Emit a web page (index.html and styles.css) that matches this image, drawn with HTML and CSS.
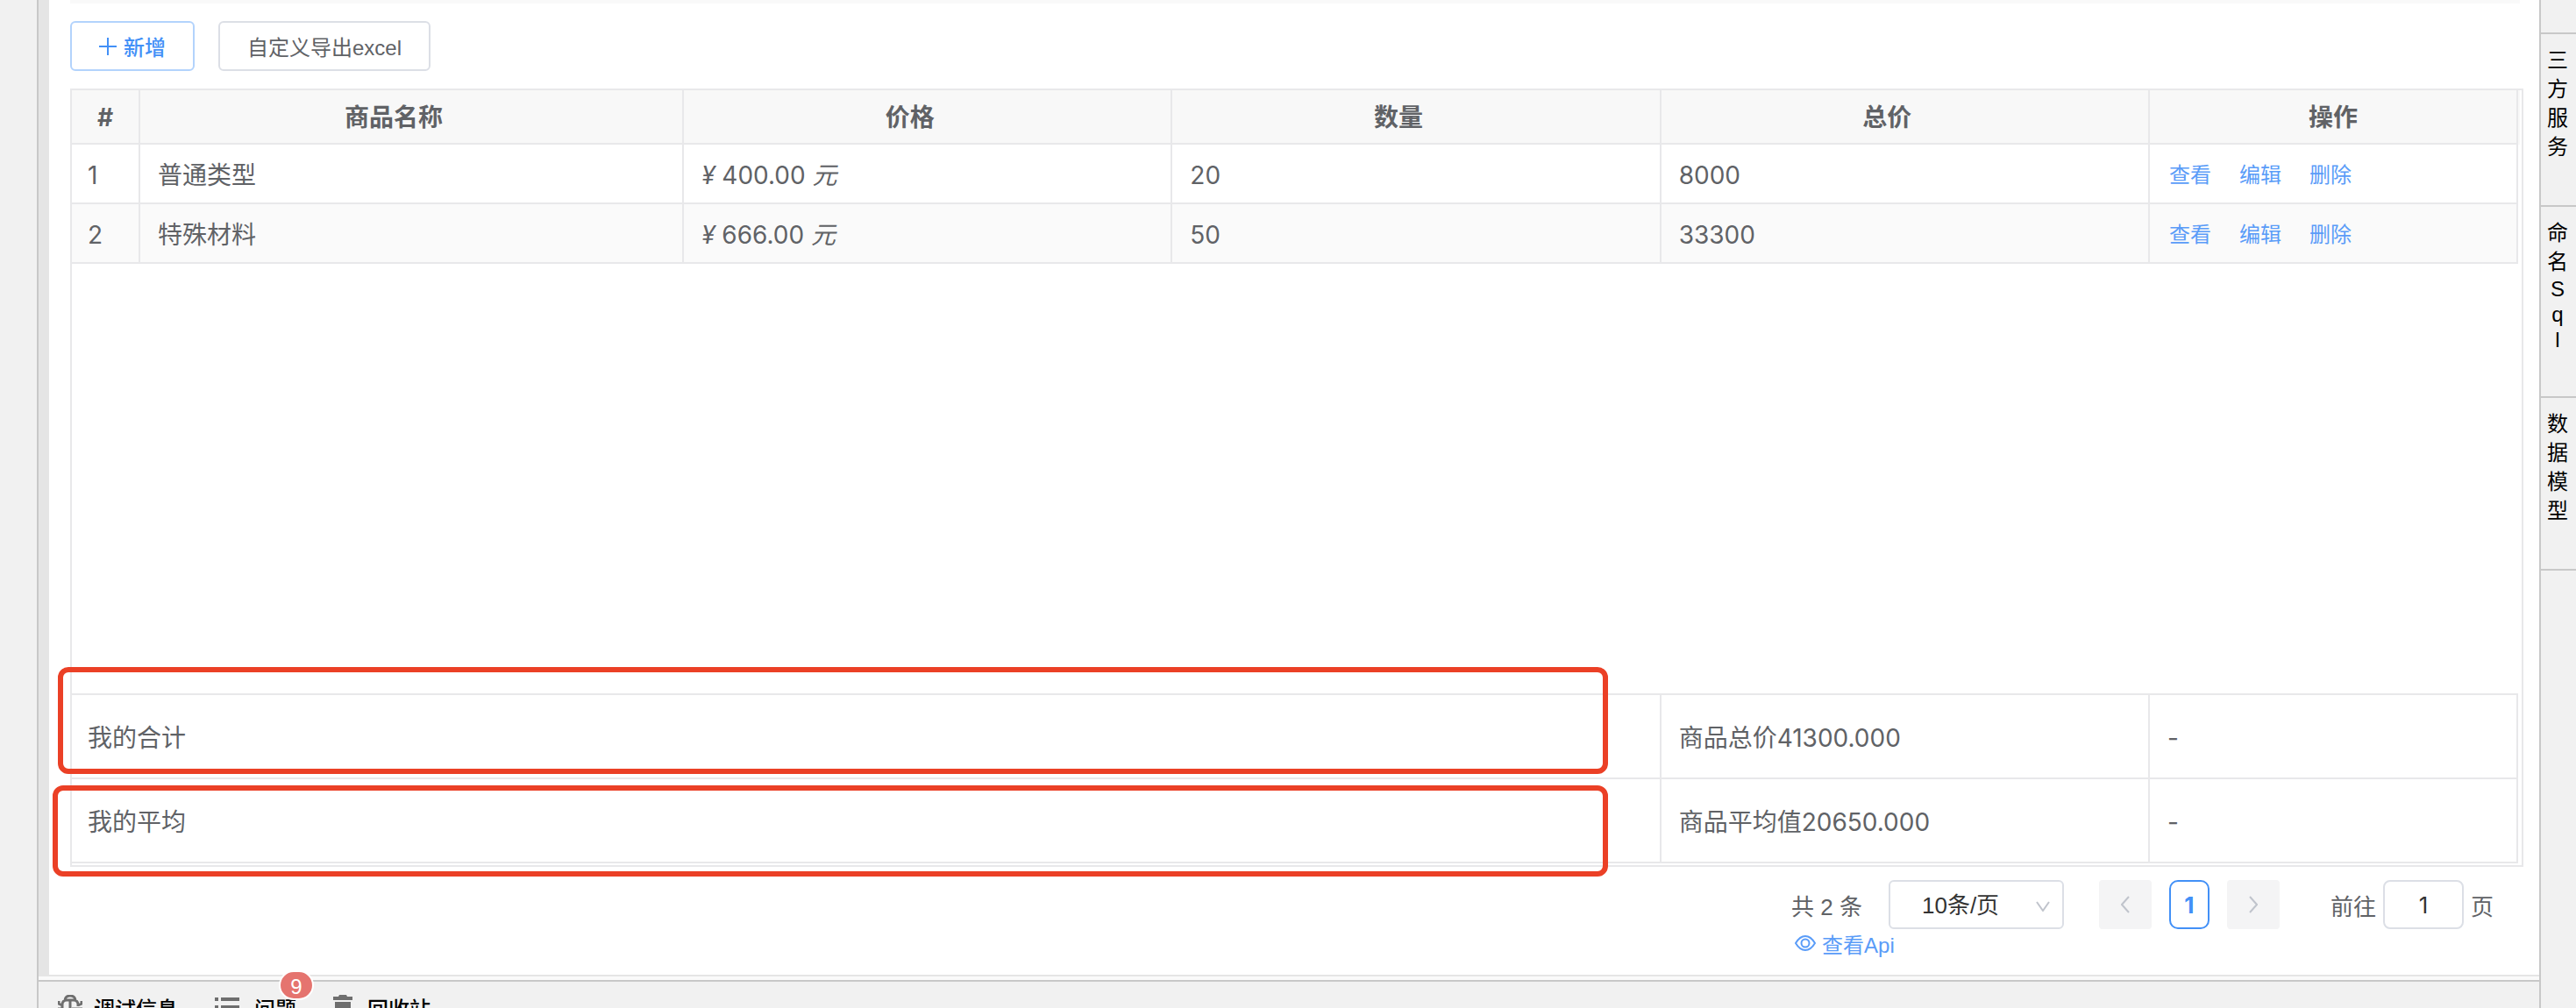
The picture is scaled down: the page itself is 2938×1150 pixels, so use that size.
FILE: index.html
```html
<!DOCTYPE html>
<html lang="zh-CN">
<head>
<meta charset="UTF-8" />
<meta name="viewport" content="width=device-width, initial-scale=1.0"/>
<title>商品列表</title>

<link rel="stylesheet" href="styles.css">
</head>

<body>

<div class="layout">
  <aside class="left-bar"></aside>

  <div class="center">
    <main class="workspace">
      <div class="search-strip"></div>

      <div class="toolbar">
        <button type="button" class="btn btn-add">
          <svg class="icon-plus" viewBox="0 0 20 20"><path d="M10 0v20M0 10h20"/></svg>
          新增
        </button>
        <button type="button" class="btn">自定义导出excel</button>
      </div>

      <div class="table-box">
        <div class="table-head">
          <table>
            <colgroup><col class="col-index"><col class="col-name"><col><col><col><col class="col-action"></colgroup>
            <thead>
              <tr><th>#</th><th class="sortable">商品名称</th><th class="sortable">价格</th><th class="sortable">数量</th><th class="sortable">总价</th><th>操作</th></tr>
            </thead>
          </table>
        </div>

        <div class="table-body">
          <table>
            <colgroup><col class="col-index"><col class="col-name"><col><col><col><col class="col-action"></colgroup>
            <tbody>
              <tr>
                <td>1</td>
                <td>普通类型</td>
                <td><i>¥</i> 400.00 <i>元</i></td>
                <td>20</td>
                <td>8000</td>
                <td><div class="actions"><a href="#">查看</a><a href="#">编辑</a><a href="#">删除</a></div></td>
              </tr>
              <tr class="striped">
                <td>2</td>
                <td>特殊材料</td>
                <td><i>¥</i> 666.00 <i>元</i></td>
                <td>50</td>
                <td>33300</td>
                <td><div class="actions"><a href="#">查看</a><a href="#">编辑</a><a href="#">删除</a></div></td>
              </tr>
            </tbody>
          </table>
        </div>

        <div class="table-foot">
          <table>
            <colgroup><col class="col-index"><col class="col-name"><col><col><col><col class="col-action"></colgroup>
            <tbody>
              <tr><td colspan="4">我的合计</td><td>商品总价41300.000</td><td>-</td></tr>
              <tr><td colspan="4">我的平均</td><td>商品平均值20650.000</td><td>-</td></tr>
            </tbody>
          </table>
          <div class="mark mark-sum"></div>
          <div class="mark mark-avg"></div>
        </div>
      </div>

      <div class="table-bottom">
        <div class="pager-wrap">
          <div class="pager">
            <span class="total">共 2 条</span>
            <div class="page-size">
              <select aria-label="每页条数">
                <option>10条/页</option>
                <option>20条/页</option>
                <option>50条/页</option>
              </select>
              <svg class="icon-down" viewBox="0 0 16 12"><path d="M1 1l7 10 7-10"/></svg>
            </div>
            <div class="pages">
              <button type="button" class="page-btn" aria-label="上一页" disabled>
                <svg viewBox="0 0 10 20"><path d="M9 1L1 10l8 9"/></svg>
              </button>
              <button type="button" class="page-current">1</button>
              <button type="button" class="page-btn" aria-label="下一页" disabled>
                <svg viewBox="0 0 10 20"><path d="M1 1l8 9-8 9"/></svg>
              </button>
            </div>
            <div class="jump">
              <label for="jump-page">前往</label>
              <input type="text" id="jump-page" value="1">
              <span>页</span>
            </div>
          </div>
          <a href="#" class="api-link">
            <svg viewBox="0 0 24 18"><path d="M1 9C4 4 7.500 1 12 1s8 3 11 8c-3 5-6.500 8-11 8S4 14 1 9z"/><circle cx="12" cy="9" r="4.500"/></svg>
            查看Api
          </a>
        </div>
      </div>
    </main>

    <footer class="status-bar">
      <a href="#" class="status-item">
        <svg class="icon-debug" viewBox="0 0 28 28">
          <path d="M8 6a6 5 0 0 1 12 0M5 15v-4c0-3 2-5 5-5h8c3 0 5 2 5 5v2M14 7v9M1 7v3l4 2M27 7v3l-4 2M0 16h5M16 16h12M16 22h10M5 15v2c0 5 4 9 9 9"/>
        </svg>
        调试信息
      </a>
      <a href="#" class="status-item">
        <svg class="icon-list" viewBox="0 0 28 22">
          <path d="M0 0h4v4H0zM7 0h21v4H7zM0 9h4v4H0zM7 9h21v4H7zM0 18h4v4H0zM7 18h21v4H7z"/>
        </svg>
        <span class="with-badge">问题<span class="badge">9</span></span>
      </a>
      <a href="#" class="status-item">
        <svg class="icon-trash" viewBox="0 0 22 28">
          <path d="M0 2h6l1-2h8l1 2h6v4H0zM2 8h18v20H2z"/>
        </svg>
        回收站
      </a>
    </footer>
  </div>

  <nav class="right-bar">
    <a href="#">三<br>方<br>服<br>务</a>
    <a href="#">命<br>名<span class="latin">S<br>q<br>l</span></a>
    <a href="#">数<br>据<br>模<br>型</a>
  </nav>
</div>

</body>
</html>
```
FILE: styles.css
```css
:root {
  --blue: #4290f7;
  --link: #5a9cf8;
  --text: #606266;
  --line: #e8e8ea;
  --control-line: #dcdfe6;
  --bar-bg: #f1f1f1;
  --bar-line: #c8c8c8;
}

* {
  box-sizing: border-box;
}

body {
  margin: 0;
  height: 100vh;
  overflow: hidden;
  background: var(--bar-bg);
  color: var(--text);
  font-family: "Liberation Sans", "Noto Sans CJK SC", sans-serif;
  font-size: 28px;
}

a {
  color: var(--link);
  text-decoration: none;
}

svg {
  display: block;
  flex: none;
  fill: none;
  stroke: currentColor;
  stroke-width: 2;
}

button, input, select {
  font: inherit;
  color: inherit;
}

.layout {
  display: grid;
  grid-template-columns: 44px 1fr 42px;
  min-height: 100vh;
}

.left-bar {
  border-right: 2px solid var(--bar-line);
}

.center {
  min-width: 0;
}

/* workspace */
.workspace {
  padding: 0 18px 20px 24px;
  background: #fff;
  border-left: 12px solid #e5e5e5;
  border-bottom: 2px solid #e5e5e5;
}

.search-strip {
  height: 4px;
  margin-right: 4px;
  background: #f9f9f9;
}

.toolbar {
  display: flex;
  gap: 27px;
  padding: 20px 0;
}

.btn {
  display: flex;
  align-items: center;
  gap: 8px;
  height: 57px;
  padding: 0 31px;
  border: 2px solid var(--control-line);
  border-radius: 6px;
  background: #fff;
  font-size: 24px;
  cursor: pointer;
}

.btn-add {
  border-color: #b3d3fc;
  color: var(--blue);
  font-weight: 500;
}

.icon-plus {
  width: 20px;
  height: 20px;
}

/* table */
.table-box {
  border: 2px solid var(--line);
  font-family: Inter, "Noto Sans CJK SC", sans-serif;
}

.table-head {
  margin-right: 2px;
  background: #f8f8f8;
}

table {
  width: calc(100% - 4px);
  table-layout: fixed;
  border-collapse: separate;
  border-spacing: 0;
}

.table-head table {
  width: calc(100% - 2px);
}

.col-index {
  width: 78px;
}

.col-name {
  width: 620px;
}

.col-action {
  width: 420px;
}

th, td {
  border-right: 2px solid var(--line);
  border-bottom: 2px solid var(--line);
  line-height: 40px;
  text-align: left;
  white-space: nowrap;
}

th {
  height: 62px;
  padding: 2px 0 0;
  text-align: center;
}

.sortable {
  padding-right: 40px;
}

td {
  height: 68px;
  padding: 4px 20px 0;
}

td:first-child {
  padding-left: 18px;
}

.striped {
  background: #fafafa;
}

.table-body {
  min-height: 626px;
}

.table-foot {
  position: relative;
  margin-bottom: 2px;
}

.table-foot table {
  border-top: 2px solid var(--line);
}

.table-foot td {
  height: 96px;
}

.actions {
  display: flex;
  gap: 32px;
  padding-left: 2px;
  font-size: 24px;
}

/* red frames over the merged summary cells */
.mark {
  position: absolute;
  border: 6px solid #eb4026;
  border-radius: 12px;
}

.mark-sum {
  top: -30px;
  left: -16px;
  width: 1768px;
  height: 122px;
}

.mark-avg {
  top: 105px;
  left: -22px;
  width: 1774px;
  height: 104px;
}

/* pagination */
.table-bottom {
  display: flex;
  justify-content: flex-end;
  padding: 15px 34px 0 0;
}

.pager {
  display: flex;
  align-items: center;
  font-size: 26px;
}

.total {
  margin-right: 30px;
}

.page-size {
  position: relative;
  margin-right: 40px;
}

.page-size select {
  display: block;
  width: 200px;
  height: 56px;
  padding: 2px 36px 0;
  border: 2px solid var(--control-line);
  border-radius: 6px;
  background: #fff;
  color: #333;
  appearance: none;
}

.icon-down {
  position: absolute;
  top: 24px;
  right: 16px;
  width: 16px;
  height: 12px;
  color: #c0c4cc;
  pointer-events: none;
}

.pages {
  display: flex;
  gap: 20px;
  margin-right: 58px;
}

.page-btn {
  display: flex;
  align-items: center;
  justify-content: center;
  width: 60px;
  height: 56px;
  padding: 0;
  border: 0;
  border-radius: 4px;
  background: #f4f4f5;
  color: #c0c4cc;
}

.page-btn svg {
  width: 10px;
  height: 20px;
}

.page-current {
  width: 46px;
  height: 56px;
  padding: 0;
  border: 2px solid var(--blue);
  border-radius: 10px;
  background: #fff;
  color: var(--blue);
  font-family: Inter, sans-serif;
  font-weight: 700;
}

.jump {
  display: flex;
  align-items: center;
  gap: 8px;
}

.jump input {
  width: 92px;
  height: 56px;
  padding: 0;
  border: 2px solid var(--control-line);
  border-radius: 8px;
  color: #333;
  font-family: Inter, sans-serif;
  text-align: center;
}

.api-link {
  display: inline-flex;
  align-items: center;
  gap: 7px;
  height: 32px;
  padding-left: 4px;
  font-size: 24px;
}

.api-link svg {
  width: 24px;
  height: 18px;
}

/* bottom status bar */
.status-bar {
  display: flex;
  gap: 42px;
  height: 60px;
  margin-top: 4px;
  padding-left: 22px;
  border-top: 2px solid var(--bar-line);
  box-shadow: 0 -4px #fafafa;
}

.status-item {
  display: flex;
  align-items: center;
  color: #000;
  font-size: 24px;
  font-weight: 500;
}

.status-item svg {
  color: #6e6e6e;
}

.icon-debug {
  width: 28px;
  height: 28px;
  margin-right: 13px;
  stroke-width: 3;
}

.icon-list {
  width: 28px;
  height: 22px;
  margin-right: 17px;
  fill: currentColor;
  stroke: none;
}

.icon-trash {
  width: 22px;
  height: 28px;
  margin-right: 17px;
  fill: currentColor;
  stroke: none;
}

.with-badge {
  position: relative;
}

.badge {
  position: absolute;
  top: -25px;
  right: -20px;
  width: 40px;
  height: 34px;
  border: 2px solid #fff;
  border-radius: 17px;
  background: #e5746f;
  color: #fff;
  font-size: 24px;
  line-height: 34px;
  text-align: center;
}

/* right rail */
.right-bar {
  padding-top: 37px;
  border-left: 2px solid var(--bar-line);
}

.right-bar a {
  display: block;
  padding: 13px 2px 50px 0;
  border-top: 2px solid var(--bar-line);
  color: #000;
  font-size: 24px;
  line-height: 33px;
  text-align: center;
}

.right-bar a:last-child {
  border-bottom: 2px solid var(--bar-line);
}

.latin {
  display: block;
  line-height: 29px;
}
```
